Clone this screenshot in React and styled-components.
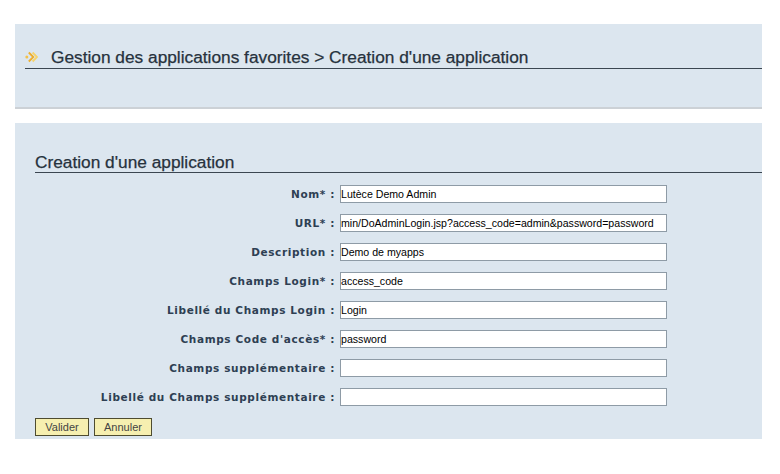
import styled, { createGlobalStyle } from "styled-components";

const GlobalStyle = createGlobalStyle`
    body {
        margin: 0;
        background: #ffffff;
        font-family: "Liberation Sans", Arial, sans-serif;
    }
`;

const Page = styled.div`
    padding: 24px 18px 0 15px;
    width: 747px;
`;

const Panel = styled.div`
    background: #dce6ef;
    border-bottom: ${(p) => (p.$shadow ? "2px solid #ccd1d6" : "none")};
    padding: ${(p) => p.$pad};
    margin-bottom: ${(p) => p.$mb || "0"};
`;

const PageTitle = styled.h1`
    display: flex;
    align-items: center;
    gap: 13px;
    margin: 0;
    padding: 0 0 1px 0;
    border-bottom: 1px solid #3b4651;
    font-size: 17.3px;
    font-weight: normal;
    color: #27323d;
    line-height: 20px;
    -webkit-text-stroke: 0.25px #27323d;
`;

const SectionTitle = styled.h2`
    margin: 0 0 12px;
    padding-bottom: 0;
    border-bottom: 1px solid #3b4651;
    font-size: 17.3px;
    font-weight: normal;
    color: #27323d;
    line-height: 20px;
    -webkit-text-stroke: 0.25px #27323d;
`;

const Form = styled.div`
    display: grid;
    grid-template-columns: 300px 327px;
    column-gap: 5px;
    row-gap: 11px;
    align-items: center;
`;

const Label = styled.label`
    text-align: right;
    font-family: "DejaVu Sans", Verdana, sans-serif;
    font-weight: bold;
    font-size: 10.5px;
    letter-spacing: 0.62px;
    color: #2e3f53;
`;

const Input = styled.input`
    box-sizing: border-box;
    width: 327px;
    height: 18px;
    margin: 0;
    padding: 0;
    border: 1px solid #8e9ba6;
    background: #fff;
    font-family: "Liberation Sans", Arial, sans-serif;
    font-size: 10.6px;
    color: #000;
    outline: none;
`;

const Buttons = styled.div`
    display: flex;
    gap: 5px;
    margin-top: 12px;
`;

const Button = styled.button`
    box-sizing: border-box;
    width: ${(p) => p.$w}px;
    height: 18px;
    padding: 0;
    background: #f6efb0;
    border: 1px solid #4e4c30;
    font-family: "Liberation Sans", Arial, sans-serif;
    font-size: 11px;
    color: #444;
`;

const Arrows = () => (
    <svg width="13" height="12" viewBox="0 0 13 12">
        <circle cx="1.8" cy="6" r="1.5" fill="#f3c24a" />
        <path d="M3.8 1.5 L8.3 6 L3.8 10.5" fill="none" stroke="#eeae2c" strokeWidth="1.8" />
        <path d="M7.6 1.5 L12.1 6 L7.6 10.5" fill="none" stroke="#f6d36a" strokeWidth="1.8" />
    </svg>
);

const fields = [
    ["Nom* :", "Lutèce Demo Admin"],
    ["URL* :", "min/DoAdminLogin.jsp?access_code=admin&password=password"],
    ["Description :", "Demo de myapps"],
    ["Champs Login* :", "access_code"],
    ["Libellé du Champs Login :", "Login"],
    ["Champs Code d'accès* :", "password"],
    ["Champs supplémentaire :", ""],
    ["Libellé du Champs supplémentaire :", ""],
];

export default function App() {
    return (
        <Page>
            <GlobalStyle />
            <Panel $shadow $pad="23px 0 38px 10px" $mb="14px">
                <PageTitle>
                    <Arrows />
                    <span>Gestion des applications favorites &gt; Creation d'une application</span>
                </PageTitle>
            </Panel>
            <Panel $pad="29px 0 3px 20px">
                <SectionTitle>Creation d'une application</SectionTitle>
                <Form>
                    {fields.map(([label, value]) => [
                        <Label key={label + "l"}>{label}</Label>,
                        <Input key={label + "i"} defaultValue={value} />,
                    ])}
                </Form>
                <Buttons>
                    <Button $w={54}>Valider</Button>
                    <Button $w={58}>Annuler</Button>
                </Buttons>
            </Panel>
        </Page>
    );
}
